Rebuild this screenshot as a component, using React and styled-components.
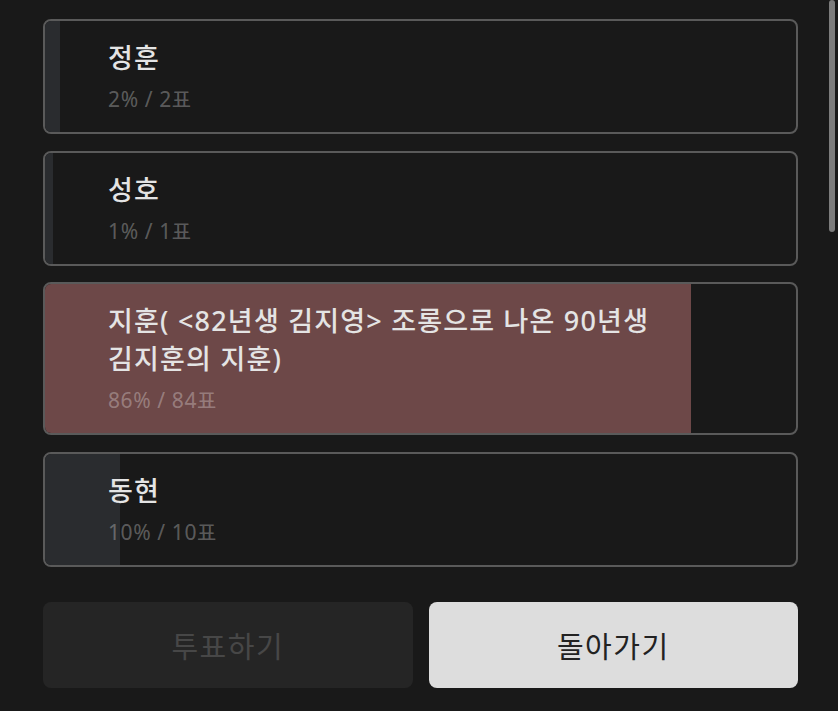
import React from "react";
import styled, { createGlobalStyle } from "styled-components";

const GlobalStyle = createGlobalStyle`
    html, body {
        margin: 0;
        padding: 0;
        background: #191919;
        font-family: "Noto Sans", "Noto Sans CJK KR", sans-serif;
    }
`;

const Page = styled.div`
    position: relative;
    width: 838px;
    height: 711px;
    box-sizing: border-box;
    padding: 19px 40px 0 43px;
    background: #191919;
    overflow: hidden;
`;

const List = styled.ul`
    list-style: none;
    margin: 0;
    padding: 0;
    display: flex;
    flex-direction: column;
    gap: 16.5px;
`;

const Option = styled.li`
    position: relative;
    border: 2px solid #5a5a5a;
    border-radius: 8px;
    overflow: hidden;
    background: #191919;
`;

const Fill = styled.div`
    position: absolute;
    top: 0;
    left: 0;
    bottom: 0;
    background: ${(props) => (props.top ? "#6d4848" : "#2a2c2f")};
`;

const Body = styled.div`
    position: relative;
    padding: 18px 63px 19px 63px;
    display: flex;
    flex-direction: column;
    gap: 8px;
`;

const Name = styled.div`
    font-size: 27px;
    font-weight: 500;
    line-height: 38px;
    letter-spacing: 1.2px;
    color: #e4e4e4;
    word-break: keep-all;
`;

const Count = styled.div`
    font-size: 21px;
    line-height: 28px;
    letter-spacing: 0.6px;
    color: rgba(255, 255, 255, 0.3);
`;

const Buttons = styled.div`
    display: grid;
    grid-template-columns: 1fr 1fr;
    gap: 16px;
    margin-top: 35px;
`;

const Button = styled.button`
    height: 86px;
    border: none;
    border-radius: 8px;
    font-family: inherit;
    font-size: 29px;
    letter-spacing: 1.5px;
    background: ${(props) => (props.primary ? "#dddddd" : "#252525")};
    color: ${(props) => (props.primary ? "#222222" : "#474747")};
`;

const Scrollbar = styled.div`
    position: absolute;
    top: 0;
    right: 3px;
    width: 6px;
    height: 232px;
    border-radius: 3px;
    background: #7c7c7c;
`;

const options = [
    { name: "정훈", pct: 2, votes: 2 },
    { name: "성호", pct: 1, votes: 1 },
    { name: "지훈( <82년생 김지영> 조롱으로 나온 90년생 김지훈의 지훈)", pct: 86, votes: 84, top: true },
    { name: "동현", pct: 10, votes: 10 },
];

function App() {
    return (
        <Page>
            <GlobalStyle />
            <List>
                {options.map((o) => (
                    <Option key={o.name}>
                        <Fill top={o.top} style={{ width: `${o.pct}%` }} />
                        <Body>
                            <Name>{o.name}</Name>
                            <Count>{o.pct}% / {o.votes}표</Count>
                        </Body>
                    </Option>
                ))}
            </List>
            <Buttons>
                <Button disabled>투표하기</Button>
                <Button primary>돌아가기</Button>
            </Buttons>
            <Scrollbar />
        </Page>
    );
}

export default App;
